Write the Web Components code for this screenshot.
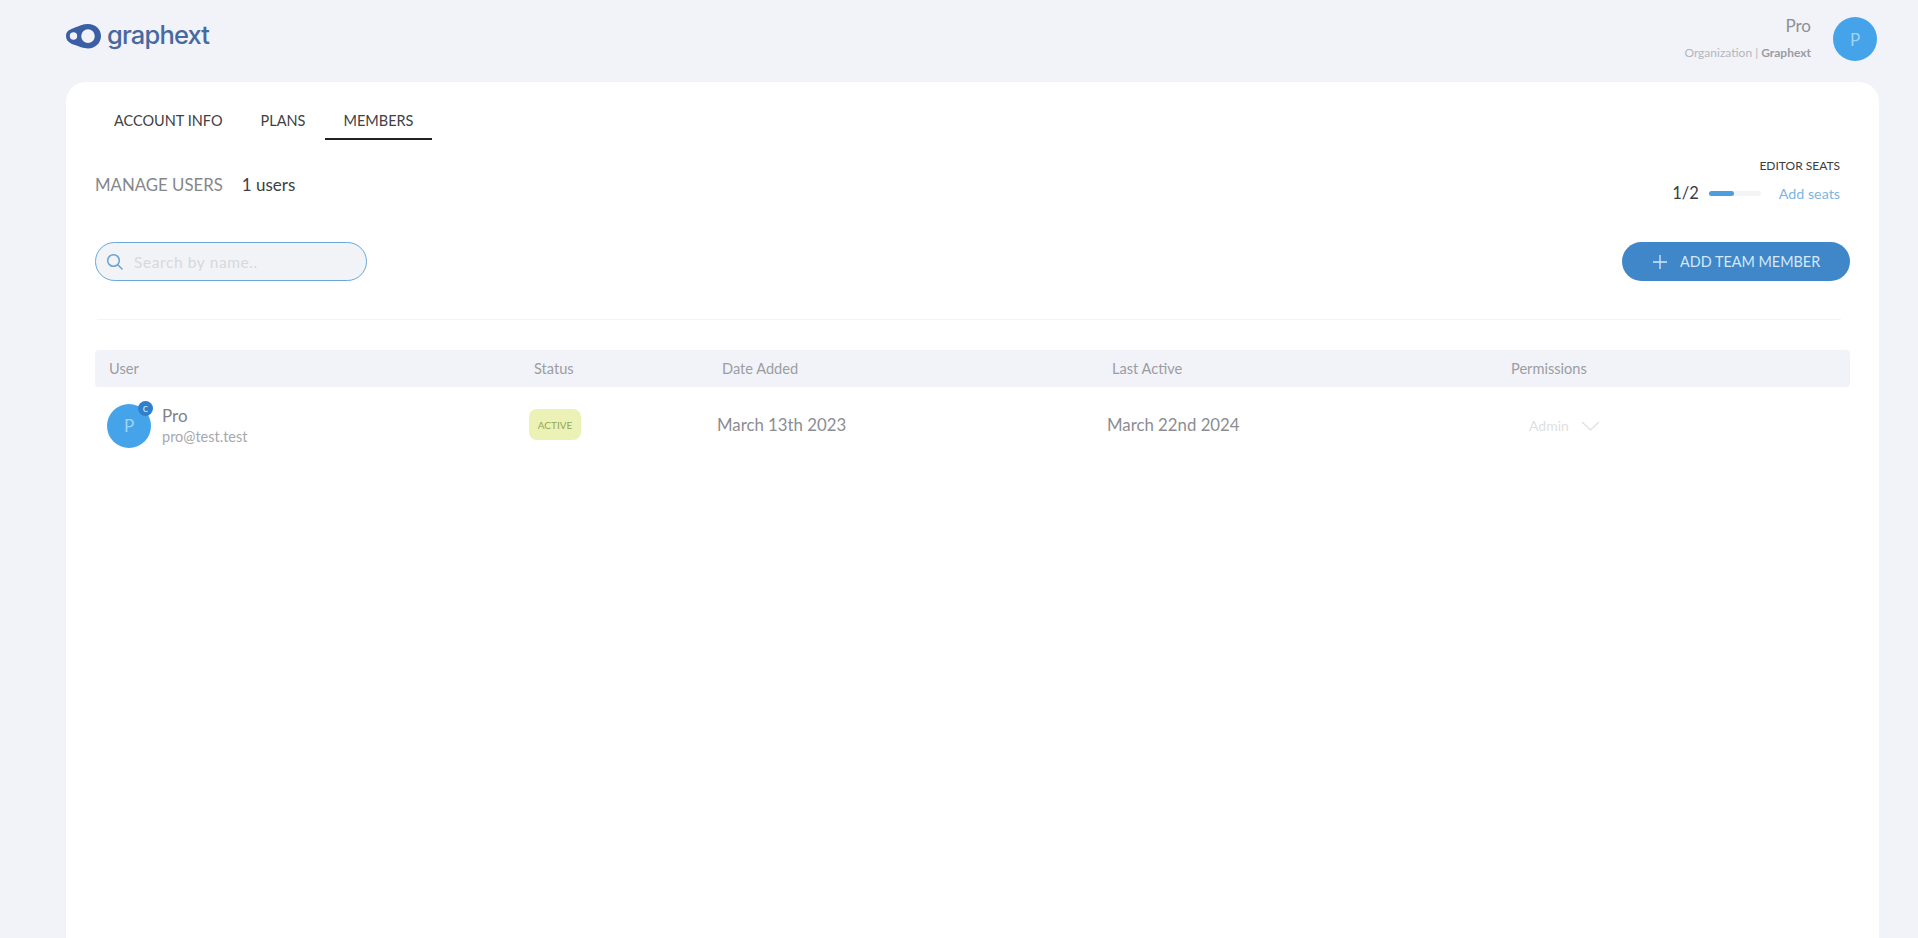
<!DOCTYPE html>
<html>
<head>
<meta charset="utf-8">
<title>Members</title>
<style>
  html, body { margin: 0; height: 100%; }
  body {
    background: #f1f3f9;
    font-family: Lato, "Liberation Sans", sans-serif;
    overflow: hidden;
  }
</style>
</head>
<body>
<members-page></members-page>

<script>
class GxLogo extends HTMLElement {
  connectedCallback () {
    this.attachShadow({ mode: 'open' }).innerHTML = /* html */`
      <style>
        :host { display: flex; align-items: center; gap: 5px; }
        svg { display: block; }
        span {
          font: 500 25.500px/36px Inter, sans-serif;
          letter-spacing: -.85px;
          color: #47699f;
          margin-top: -1px;
        }
      </style>
      <svg width="36" height="28" viewBox="0 0 36 28">
        <path fill="#3a5fa4" fill-rule="evenodd" d="M9 5.500C12.500 4.200 17 2 22 2c7.500 0 13 5.300 13 12s-5.500 12.500-13 12.500c-5 0-9.500-2.300-13-3.500C4 21.500 0 19 0 14S4 7.300 9 5.500zM7.500 10.300a3.700 3.700 0 1 0 0 7.400 3.700 3.700 0 0 0 0-7.400zM22 7.300a6.800 6.800 0 1 0 0 13.600 6.800 6.800 0 0 0 0-13.600z"/>
      </svg>
      <span>graphext</span>
    `
  }
}

class GxAvatar extends HTMLElement {
  connectedCallback () {
    this.attachShadow({ mode: 'open' }).innerHTML = /* html */`
      <style>
        :host {
          display: flex;
          position: relative;
          flex: none;
          width: 44px;
          height: 44px;
          border-radius: 50%;
          background: #45a3ea;
          color: #9ed3f8;
          align-items: center;
          justify-content: center;
          font-size: 17px;
        }
        .badge {
          position: absolute;
          top: -3px;
          right: -2px;
          width: 15px;
          height: 15px;
          border-radius: 50%;
          background: #2f7fca;
          color: #cfe8fb;
          font-size: 11px;
          line-height: 13px;
          text-align: center;
        }
      </style>
      <slot></slot>
      ${this.hasAttribute('badge') ? '<span class="badge">c</span>' : ''}
    `
  }
}

class GxHeader extends HTMLElement {
  connectedCallback () {
    this.attachShadow({ mode: 'open' }).innerHTML = /* html */`
      <style>
        :host {
          display: flex;
          justify-content: space-between;
          height: 82px;
          padding: 0 41px 0 66px;
          box-sizing: border-box;
        }
        .logo { padding-top: 18px; }
        .account { display: flex; padding-top: 17px; gap: 22px; }
        .who { text-align: right; }
        .name { font-size: 17px; line-height: 20px; margin-top: -1px; color: #8d8f94; }
        .org { margin-top: 10px; font-size: 12px; line-height: 14px; color: #b4b6bc; }
        .org b { color: #9a9ca2; }
      </style>
      <div class="logo"><gx-logo></gx-logo></div>
      <div class="account">
        <div class="who">
          <div class="name">Pro</div>
          <div class="org">Organization | <b>Graphext</b></div>
        </div>
        <gx-avatar>P</gx-avatar>
      </div>
    `
  }
}

class GxTabs extends HTMLElement {
  connectedCallback () {
    this.attachShadow({ mode: 'open' }).innerHTML = /* html */`
      <style>
        :host { display: flex; height: 58px; box-sizing: border-box; }
        a {
          display: block;
          height: 56px;
          padding: 0 19px;
          font-size: 14.500px;
          line-height: 77px;
          color: #3f4144;
        }
        a.on { margin-left: 1px; padding: 0 19px 0 18px; border-bottom: 2px solid #222; }
      </style>
      <a>ACCOUNT INFO</a>
      <a>PLANS</a>
      <a class="on">MEMBERS</a>
    `
  }
}

class GxSeats extends HTMLElement {
  connectedCallback () {
    this.attachShadow({ mode: 'open' }).innerHTML = /* html */`
      <style>
        :host { display: flex; flex-direction: column; align-items: flex-end; }
        .title { font-size: 12px; line-height: 14px; color: #3b3d40; }
        .line { display: flex; align-items: center; margin-top: 11px; height: 18px; }
        .count { font-size: 16.500px; color: #3b3d40; }
        .bar { width: 52px; height: 5px; margin: 0 18px 0 10px; border-radius: 3px; background: #f3f4f6; }
        .bar i { display: block; width: 25px; height: 100%; border-radius: 3px; background: #4d9ede; }
        .add { font-size: 14.300px; color: #7db5e2; }
      </style>
      <div class="title">EDITOR SEATS</div>
      <div class="line">
        <span class="count">1/2</span>
        <div class="bar"><i></i></div>
        <span class="add">Add seats</span>
      </div>
    `
  }
}

class GxSearch extends HTMLElement {
  connectedCallback () {
    this.attachShadow({ mode: 'open' }).innerHTML = /* html */`
      <style>
        :host {
          display: flex;
          align-items: center;
          width: 272px;
          height: 39px;
          box-sizing: border-box;
          padding-left: 10px;
          border: 1px solid #6aa8dc;
          border-radius: 20px;
          background: #f1f3f7;
        }
        svg { flex: none; }
        span { margin-left: 10px; font-size: 15.500px; letter-spacing: .6px; color: #d6d9de; }
      </style>
      <svg width="18" height="18" viewBox="0 0 18 18" fill="none" stroke="#6aa3cf" stroke-width="1.500">
        <circle cx="7.500" cy="7.500" r="5.800"/>
        <path d="M11.800 11.800L16.500 16.500"/>
      </svg>
      <span>Search by name..</span>
    `
  }
}

class GxButton extends HTMLElement {
  connectedCallback () {
    this.attachShadow({ mode: 'open' }).innerHTML = /* html */`
      <style>
        :host {
          display: flex;
          align-items: center;
          width: 228px;
          height: 39px;
          box-sizing: border-box;
          padding-left: 31px;
          border-radius: 20px;
          background: #3f87c8;
          color: #d6e8f7;
          font-size: 14.400px;
        }
        svg { flex: none; margin-right: 13px; }
      </style>
      <svg width="14" height="14" viewBox="0 0 14 14" stroke="#d6e8f7" stroke-width="1.300">
        <path d="M7 0V14M0 7H14"/>
      </svg>
      <slot></slot>
    `
  }
}

class GxTable extends HTMLElement {
  connectedCallback () {
    this.attachShadow({ mode: 'open' }).innerHTML = /* html */`
      <style>
        :host { display: block; }
        .head, .row { display: grid; align-items: center; }
        .head {
          grid-template-columns: 425px 188px 390px 399px 1fr;
          height: 36px;
          padding: 0 0 1px 14px;
          border-radius: 4px;
          background: #f1f3f8;
          font-size: 14.600px;
          color: #9b9da3;
        }
        .row {
          grid-template-columns: 422px 188px 390px 422px 1fr;
          height: 75px;
          padding-left: 12px;
          font-size: 16.800px;
          color: #8b8d92;
        }
        .user { display: flex; align-items: center; gap: 11px; padding-top: 2px; }
        .name { font-size: 17px; line-height: 20px; color: #808286; }
        .mail { margin-top: 2px; font-size: 14.500px; line-height: 17px; color: #a6a8ad; }
        .badge {
          display: flex;
          align-items: center;
          justify-content: center;
          width: 52px;
          height: 31px;
          border-radius: 8px;
          background: #ecf2b6;
          color: #97a654;
          font-size: 10px;
        }
        .perm { display: flex; align-items: center; gap: 12px; padding-top: 2px; font-size: 14px; color: #dddfe2; }
      </style>
      <div class="head">
        <span>User</span>
        <span>Status</span>
        <span>Date Added</span>
        <span>Last Active</span>
        <span>Permissions</span>
      </div>
      <div class="row">
        <div class="user">
          <gx-avatar badge>P</gx-avatar>
          <div>
            <div class="name">Pro</div>
            <div class="mail">pro@test.test</div>
          </div>
        </div>
        <div><span class="badge">ACTIVE</span></div>
        <div>March 13th 2023</div>
        <div>March 22nd 2024</div>
        <div class="perm">
          <span>Admin</span>
          <svg width="19" height="10" viewBox="0 0 19 10" fill="none" stroke="#dddfe2" stroke-width="1.200"><path d="M1 1L9.500 9L18 1"/></svg>
        </div>
      </div>
    `
  }
}

class MembersPage extends HTMLElement {
  connectedCallback () {
    this.attachShadow({ mode: 'open' }).innerHTML = /* html */`
      <style>
        :host { display: block; height: 938px; overflow: hidden; }
        .card {
          height: 856px;
          margin: 0 39px 0 66px;
          box-sizing: border-box;
          padding: 0 29px 0 29px;
          border-radius: 20px 20px 0 0;
          background: #fff;
        }
        .manage {
          display: flex;
          justify-content: space-between;
          padding: 19px 10px 0 0;
          height: 102px;
          box-sizing: border-box;
        }
        .title { display: flex; align-items: baseline; padding-top: 15px; font-size: 16.800px; color: #85878b; }
        .title b { margin-left: 19px; font-weight: 400; font-size: 17px; color: #3d3f42; }
        .tools { display: flex; justify-content: space-between; align-items: flex-start; }
        hr { height: 1px; margin: 38px 9px 30px 2px; border: 0; background: #f3f4f7; }
      </style>
      <gx-header></gx-header>
      <div class="card">
        <gx-tabs></gx-tabs>
        <div class="manage">
          <div class="title">MANAGE USERS <b>1 users</b></div>
          <gx-seats></gx-seats>
        </div>
        <div class="tools">
          <gx-search></gx-search>
          <gx-button>ADD TEAM MEMBER</gx-button>
        </div>
        <hr>
        <gx-table></gx-table>
      </div>
    `
  }
}

customElements.define('gx-logo', GxLogo)
customElements.define('gx-avatar', GxAvatar)
customElements.define('gx-header', GxHeader)
customElements.define('gx-tabs', GxTabs)
customElements.define('gx-seats', GxSeats)
customElements.define('gx-search', GxSearch)
customElements.define('gx-button', GxButton)
customElements.define('gx-table', GxTable)
customElements.define('members-page', MembersPage)
</script>
</body>
</html>
